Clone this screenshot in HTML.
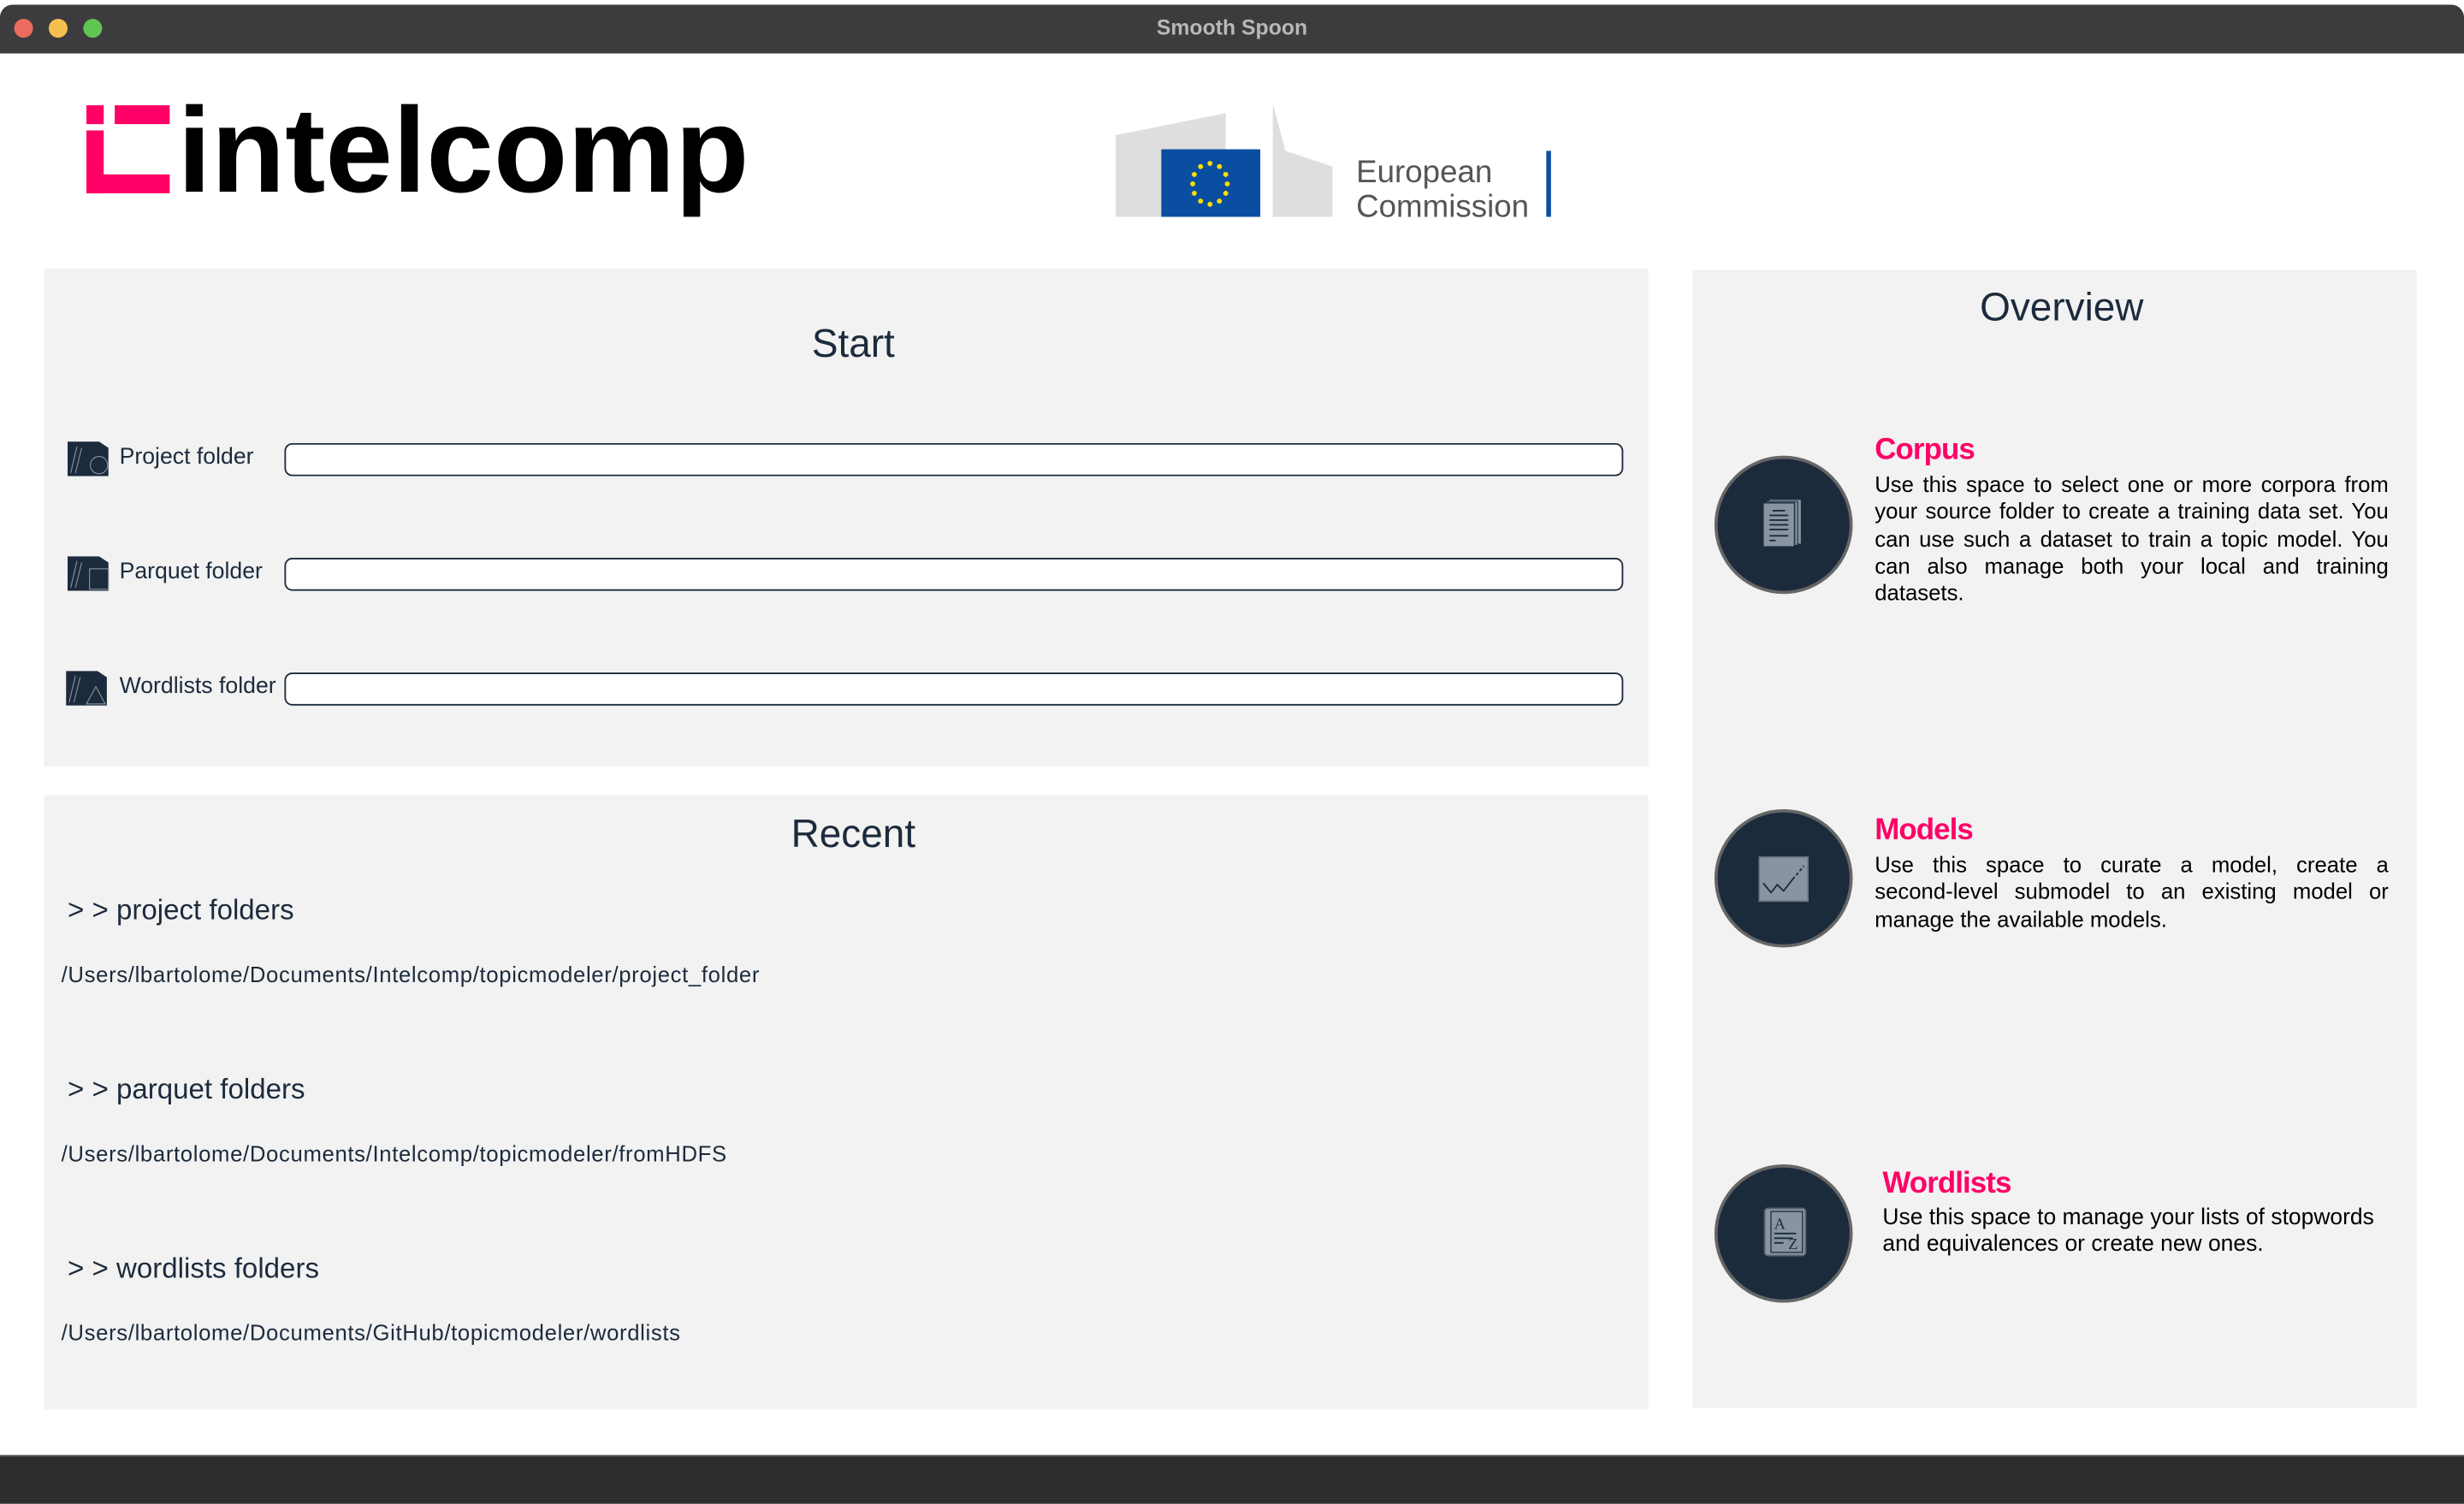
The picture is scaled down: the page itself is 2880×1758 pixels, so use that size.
<!DOCTYPE html>
<html><head><meta charset="utf-8"><style>
html,body{margin:0;padding:0;width:2880px;height:1756px;overflow:hidden;background:#fff}
#w{position:absolute;left:0;top:0;width:1568px;height:956px;transform:scale(1.83673);transform-origin:0 0;font-family:"Liberation Sans",sans-serif;background:#fff}
.a{position:absolute}
.tb{left:0;top:3px;width:1568px;height:31px;background:#3c3c3e;border-radius:8px 8px 0 0}
.dot{width:12px;height:12px;border-radius:50%;top:12px}
.panel{background:#f2f2f2}
.nav{color:#1c2b3c}
.inp{position:absolute;left:181px;width:850px;height:19px;border:1.5px solid #1c2b3c;border-radius:5px;background:#fff}
.lbl{position:absolute;left:76px;font-size:14.5px;color:#1c2b3c}
.circ{position:absolute;left:1091px;width:84px;height:84px;border-radius:50%;background:#1c2b3c;border:2px solid #666}
.h{position:absolute;color:#ff0066;font-weight:bold;font-size:19px;letter-spacing:-0.5px}
.p{position:absolute;font-size:14px;line-height:17.3px;color:#000;text-align:justify;width:327px}
.rh{position:absolute;left:43px;font-size:18px;color:#1c2b3c}
.rp{position:absolute;left:39px;font-size:14px;color:#1c2b3c;letter-spacing:0.35px}
</style></head><body><div id="w">
<div class="a tb"></div>
<div class="a dot" style="left:9px;background:#ed6a5e"></div>
<div class="a dot" style="left:31px;background:#f5bf4f"></div>
<div class="a dot" style="left:53px;background:#61c554"></div>
<div class="a" style="left:0;width:1568px;top:10px;text-align:center;color:#b8b8b8;font-weight:bold;font-size:13.5px">Smooth Spoon</div>

<!-- intelcomp logo -->
<div class="a" style="left:55px;top:67px;width:11px;height:12px;background:#ff0066"></div>
<div class="a" style="left:73px;top:67px;width:35px;height:12px;background:#ff0066"></div>
<div class="a" style="left:55px;top:83px;width:11px;height:40px;background:#ff0066"></div>
<div class="a" style="left:55px;top:111px;width:53px;height:12px;background:#ff0066"></div>
<div class="a" style="left:113px;top:58px;font-size:77px;font-weight:bold;color:#000;letter-spacing:0px;line-height:1">intelcomp</div>

<!-- EC logo -->
<svg class="a" style="left:708px;top:66px" width="282" height="74" viewBox="0 0 282 74">
<g fill="#c8c8c8">
<path d="M2 20 L72 6 L72 72 L2 72Z" opacity=".6"/>
<path d="M102 0 L110 30 L140 40 L140 72 L102 72Z" opacity=".6"/>
</g>
<rect x="31" y="29" width="63" height="43" fill="#0a4ea1"/>
<g fill="#ffde00">
<circle cx="62" cy="38" r="1.6"/><circle cx="68" cy="40" r="1.6"/><circle cx="72" cy="45" r="1.6"/><circle cx="73" cy="51" r="1.6"/><circle cx="72" cy="57" r="1.6"/><circle cx="68" cy="62" r="1.6"/><circle cx="62" cy="64" r="1.6"/><circle cx="56" cy="62" r="1.6"/><circle cx="52" cy="57" r="1.6"/><circle cx="51" cy="51" r="1.6"/><circle cx="52" cy="45" r="1.6"/><circle cx="56" cy="40" r="1.6"/>
</g>
<text x="155" y="50" font-family="Liberation Sans" font-size="20" fill="#555">European</text>
<text x="155" y="72" font-family="Liberation Sans" font-size="20" fill="#555">Commission</text>
<rect x="276" y="30" width="3" height="42" fill="#0a4ea1"/>
</svg>

<!-- Start panel -->
<div class="a panel" style="left:28px;top:171px;width:1021px;height:317px"></div>
<div class="a nav" style="left:28px;width:1030px;top:205px;text-align:center;font-size:25px">Start</div>
<svg class="a" style="left:43px;top:281px" width="27" height="22" viewBox="0 0 27 22"><path d="M0 0h20l6 4v18H0Z" fill="#1c2b3c"/><path d="M2 20 L6 3 M5 20 L9 4" stroke="#8894a0" stroke-width=".6"/><circle cx="20" cy="15" r="5.5" fill="#1c2b3c" stroke="#8894a0" stroke-width=".6"/></svg>
<div class="lbl" style="top:283px">Project folder</div>
<div class="inp" style="top:282px"></div>
<svg class="a" style="left:43px;top:354px" width="27" height="22" viewBox="0 0 27 22"><path d="M0 0h20l6 4v18H0Z" fill="#1c2b3c"/><path d="M2 20 L6 3 M5 20 L9 4" stroke="#8894a0" stroke-width=".6"/><rect x="14" y="8" width="12" height="13" fill="#1c2b3c" stroke="#8894a0" stroke-width=".6"/></svg>
<div class="lbl" style="top:356px">Parquet folder</div>
<div class="inp" style="top:355px"></div>
<svg class="a" style="left:42px;top:427px" width="27" height="22" viewBox="0 0 27 22"><path d="M0 0h20l6 4v18H0Z" fill="#1c2b3c"/><path d="M2 20 L6 3 M5 20 L9 4" stroke="#8894a0" stroke-width=".6"/><path d="M13 21 L19 10 L25 21Z" fill="#1c2b3c" stroke="#8894a0" stroke-width=".6"/></svg>
<div class="lbl" style="top:429px">Wordlists folder</div>
<div class="inp" style="top:428px"></div>

<!-- Recent -->
<div class="a panel" style="left:28px;top:506px;width:1021px;height:391px"></div>
<div class="a nav" style="left:28px;width:1030px;top:517px;text-align:center;font-size:25px">Recent</div>
<div class="rh" style="top:569px">&gt; &gt; project folders</div>
<div class="rp" style="top:612px">/Users/lbartolome/Documents/Intelcomp/topicmodeler/project_folder</div>
<div class="rh" style="top:683px">&gt; &gt; parquet folders</div>
<div class="rp" style="top:726px">/Users/lbartolome/Documents/Intelcomp/topicmodeler/fromHDFS</div>
<div class="rh" style="top:797px">&gt; &gt; wordlists folders</div>
<div class="rp" style="top:840px">/Users/lbartolome/Documents/GitHub/topicmodeler/wordlists</div>

<!-- Overview -->
<div class="a panel" style="left:1077px;top:172px;width:461px;height:724px"></div>
<div class="a nav" style="left:1077px;width:470px;top:182px;text-align:center;font-size:25px">Overview</div>

<div class="circ" style="top:290px"></div>
<svg class="a" style="left:1122px;top:318px" width="26" height="30" viewBox="0 0 26 30"><rect x="4" y="0" width="20" height="28" fill="#8894a0"/><rect x="2" y="1" width="20" height="28" fill="#8894a0" stroke="#1c2b3c" stroke-width=".6"/><rect x="0" y="2" width="20" height="28" fill="#8894a0" stroke="#1c2b3c" stroke-width=".8"/><path d="M6 7h8M4 10h12M4 13h12M4 16h12M4 19h12M4 23h12M4 26h4" stroke="#1c2b3c" stroke-width="1"/></svg>
<div class="h" style="left:1193px;top:276px">Corpus</div>
<div class="p" style="left:1193px;top:300px">Use this space to select one or more corpora from your source folder to create a training data set. You can use such a dataset to train a topic model. You can also manage both your local and training datasets.</div>

<div class="circ" style="top:515px"></div>
<svg class="a" style="left:1119px;top:545px" width="32" height="29" viewBox="0 0 32 29"><rect x="0.5" y="0.5" width="31" height="28" fill="#8894a0" stroke="#6a7682"/><path d="M3 17 L8 23 L12 18 L16 22 L23 13" stroke="#1c2b3c" fill="none" stroke-width="1"/><path d="M24 12 L29 6" stroke="#1c2b3c" stroke-width="1" stroke-dasharray="2 1.5"/></svg>
<div class="h" style="left:1193px;top:518px">Models</div>
<div class="p" style="left:1193px;top:542px">Use this space to curate a model, create a second&#8209;level submodel to an existing model or manage the available models.</div>

<div class="circ" style="top:741px"></div>
<svg class="a" style="left:1122px;top:768px" width="28" height="32" viewBox="0 0 28 32"><rect x="1" y="1" width="26" height="30" rx="2" fill="#8894a0" stroke="#5a6672"/><rect x="5" y="3" width="20" height="26" fill="#8894a0" stroke="#1c2b3c" stroke-width=".7"/><text x="7" y="14" font-family="Liberation Serif" font-size="10" fill="#1c2b3c">A</text><text x="16" y="27" font-family="Liberation Serif" font-size="10" fill="#1c2b3c">Z</text><path d="M7 17h14M7 20h12M7 23h6" stroke="#1c2b3c" stroke-width="1"/></svg>
<div class="h" style="left:1198px;top:743px">Wordlists</div>
<div class="p" style="left:1198px;top:767px;width:325px;text-align:left;font-size:14.4px">Use this space to manage your lists of stopwords and equivalences or create new ones.</div>

<div class="a" style="left:0;top:926px;width:1568px;height:30px;background:#2d2d2f;border-top:1px solid #555"></div>
</div></body></html>
